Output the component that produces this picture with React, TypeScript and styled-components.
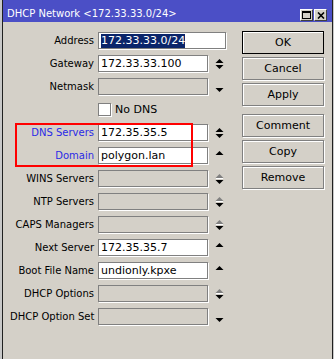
import React from "react";
import styled, { createGlobalStyle } from "styled-components";

const GlobalStyle = createGlobalStyle`
  html, body {
    margin: 0;
    padding: 0;
    background: #d4d0c8;
  }
  body {
    font-family: "DejaVu Sans", Verdana, sans-serif;
    font-size: 10px;
  }
`;

const Screen = styled.div`
  position: relative;
  width: 334px;
  height: 359px;
  overflow: hidden;
  display: flex;
  background: #dcdcdc;
`;

const DesktopStrip = styled.div<{ $w: number }>`
  width: ${(p) => p.$w}px;
  flex: none;
  background: #c8c8c8;
`;

const Window = styled.div`
  flex: 1;
  display: flex;
  flex-direction: column;
  border-left: 1px solid #202020;
  border-right: 1px solid #202020;
  background: #d4d0c8;
`;

const TitleBar = styled.div`
  height: 22px;
  flex: none;
  display: flex;
  align-items: flex-end;
  justify-content: space-between;
  padding: 0 5px 1px 4px;
  box-sizing: border-box;
  background: #4b4fc6;
  color: #fff;
  line-height: 13px;
`;

const TitleText = styled.span`
  padding-bottom: 1px;
`;

const TitleButtons = styled.div`
  display: flex;
  gap: 1px;
`;

const TitleButton = styled.div`
  width: 13px;
  height: 12px;
  box-sizing: border-box;
  background: #d4d0c8;
  border: 1px solid;
  border-color: #fff #404040 #404040 #fff;
  display: flex;
  align-items: center;
  justify-content: center;
`;

const Body = styled.div`
  display: flex;
  padding: 10px 0 0 7px;
  gap: 16px;
`;

const Form = styled.div`
  display: flex;
  flex-direction: column;
  gap: 6px;
`;

const Row = styled.div`
  display: flex;
  align-items: center;
  height: 17px;
  gap: 3px;
`;

const Label = styled.div<{ $blue?: boolean }>`
  width: 85px;
  flex: none;
  text-align: right;
  white-space: nowrap;
  overflow: hidden;
  padding-right: 1px;
  box-sizing: border-box;
  color: ${(p) => (p.$blue ? "#2a2ae6" : "#000")};
`;

const Field = styled.div<{ $wide?: boolean; $disabled?: boolean }>`
  width: ${(p) => (p.$wide ? 128 : 110)}px;
  height: 17px;
  flex: none;
  box-sizing: border-box;
  border: 1px solid #808080;
  box-shadow: 1px 1px 0 #fff;
  background: ${(p) => (p.$disabled ? "#d4d0c8" : "#fff")};
  padding: 0 2px;
  line-height: 15px;
  white-space: nowrap;
  overflow: hidden;
  font-size: 11px;
`;

const Selected = styled.span`
  display: inline-block;
  background: #0a246a;
  color: #fff;
  line-height: 14px;
  margin-top: 0;
`;

const Spin = styled.div`
  width: 10px;
  margin-left: 3px;
  display: flex;
  align-items: center;
  justify-content: center;
`;

const CheckRow = styled.div`
  display: flex;
  align-items: center;
  height: 17px;
  padding-left: 88px;
  gap: 4px;
  font-size: 11px;
`;

const CheckBox = styled.div`
  width: 13px;
  height: 13px;
  box-sizing: border-box;
  border: 1px solid #808080;
  box-shadow: 1px 1px 0 #fff;
  background: #fff;
`;

const Buttons = styled.div`
  display: flex;
  flex-direction: column;
  padding-top: 0;
`;

const Button = styled.div<{ $default?: boolean; $gapTop?: number }>`
  width: 82px;
  height: 23px;
  box-sizing: border-box;
  margin-top: ${(p) => p.$gapTop ?? 3}px;
  display: flex;
  align-items: center;
  justify-content: center;
  font-size: 11px;
  border: 1px solid ${(p) => (p.$default ? "#000" : "#808080")};
  box-shadow: ${(p) =>
    p.$default ? "inset 1px 1px 0 #fff" : "1px 1px 0 #fff, inset 1px 1px 0 #fff"};
`;

const Highlight = styled.div`
  position: absolute;
  left: 15px;
  top: 123px;
  width: 178px;
  height: 44px;
  box-sizing: border-box;
  border: 2px solid #ff0000;
  pointer-events: none;
`;

type Arrows = "both" | "up" | "down" | "dim";

const Spinner = ({ kind }: { kind: Arrows }) => (
  <Spin>
    <svg width="9" height="10" viewBox="0 0 9 10">
      {(kind === "both" || kind === "up") && <polygon points="0.5,4 4.5,0 8.5,4" fill="#000" />}
      {kind === "dim" && (
        <>
          <polygon points="0.5,4 4.5,0 8.5,4" fill="#808080" />
          <line x1="1" y1="4.5" x2="8" y2="4.5" stroke="#fff" strokeWidth="1" />
        </>
      )}
      {(kind === "both" || kind === "down" || kind === "dim") && (
        <polygon points="0.5,6 8.5,6 4.5,10" fill="#000" />
      )}
    </svg>
  </Spin>
);

type FieldDef = {
  label: string;
  value?: string;
  arrows?: Arrows;
  blue?: boolean;
};

const fields: FieldDef[] = [
  { label: "DNS Servers", value: "172.35.35.5", arrows: "both", blue: true },
  { label: "Domain", value: "polygon.lan", arrows: "up", blue: true },
  { label: "WINS Servers", arrows: "dim" },
  { label: "NTP Servers", arrows: "dim" },
  { label: "CAPS Managers", arrows: "dim" },
  { label: "Next Server", value: "172.35.35.7", arrows: "up" },
  { label: "Boot File Name", value: "undionly.kpxe", arrows: "up" },
  { label: "DHCP Options", arrows: "dim" },
  { label: "DHCP Option Set", arrows: "down" },
];

const App = () => (
  <Screen>
    <GlobalStyle />
    <DesktopStrip $w={2} />
    <Window>
      <TitleBar>
        <TitleText>DHCP Network &lt;172.33.33.0/24&gt;</TitleText>
        <TitleButtons>
          <TitleButton>
            <svg width="9" height="8" viewBox="0 0 9 8">
              <rect x="0.5" y="0.5" width="8" height="7" fill="none" stroke="#000" />
              <line x1="0" y1="1.5" x2="9" y2="1.5" stroke="#000" />
            </svg>
          </TitleButton>
          <TitleButton>
            <svg width="8" height="7" viewBox="0 0 8 7">
              <path d="M1 0.5 L7 6.5 M7 0.5 L1 6.5" stroke="#000" strokeWidth="1.6" />
            </svg>
          </TitleButton>
        </TitleButtons>
      </TitleBar>
      <Body>
        <Form>
          <Row>
            <Label>Address</Label>
            <Field $wide>
              <Selected>172.33.33.0/24</Selected>
            </Field>
          </Row>
          <Row>
            <Label>Gateway</Label>
            <Field>172.33.33.100</Field>
            <Spinner kind="both" />
          </Row>
          <Row>
            <Label>Netmask</Label>
            <Field $disabled />
            <Spinner kind="down" />
          </Row>
          <CheckRow>
            <CheckBox />
            <span>No DNS</span>
          </CheckRow>
          {fields.map((f) => (
            <Row key={f.label}>
              <Label $blue={f.blue}>{f.label}</Label>
              <Field $disabled={!f.value}>{f.value}</Field>
              {f.arrows && <Spinner kind={f.arrows} />}
            </Row>
          ))}
        </Form>
        <Buttons>
          <Button $default $gapTop={-1}>OK</Button>
          <Button>Cancel</Button>
          <Button>Apply</Button>
          <Button $gapTop={8}>Comment</Button>
          <Button>Copy</Button>
          <Button>Remove</Button>
        </Buttons>
      </Body>
    </Window>
    <DesktopStrip $w={1} />
    <Highlight />
  </Screen>
);

export default App;
